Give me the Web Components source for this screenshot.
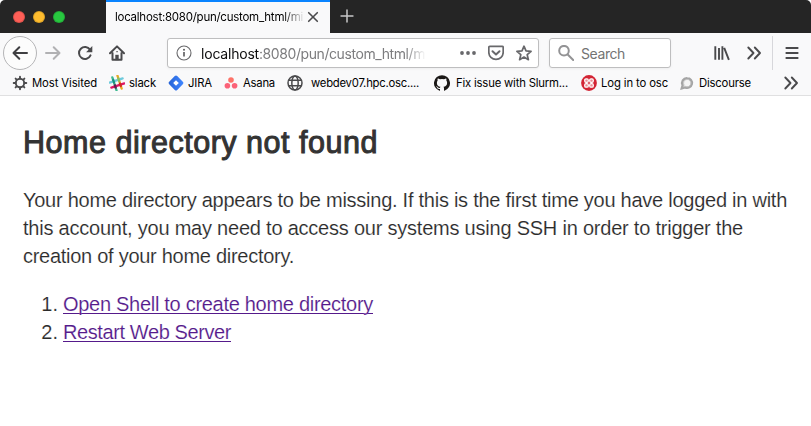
<!DOCTYPE html>
<html lang="en">
<head>
<meta charset="utf-8">
<title>Home directory not found</title>
<style>
html,body{margin:0;padding:0;background:#fff;overflow:hidden}
body{font-family:Inter,"Liberation Sans",sans-serif;color:#000}
</style>
</head>
<body>
<browser-window></browser-window>
<script>
const icon = {
back:'<path d="M15 8H2M7.3 2.2 1.5 8l5.8 5.8" fill="none" stroke="#3f3f42" stroke-width="2" stroke-linecap="round" stroke-linejoin="round"/>',
forward:'<path d="M1 8h13M8.7 2.2 14.5 8l-5.8 5.8" fill="none" stroke="#b1b1b3" stroke-width="2" stroke-linecap="round" stroke-linejoin="round"/>',
reload:'<path d="M13 4.6A6 6 0 1 0 13.5 10.4" fill="none" stroke="#4a4a4c" stroke-width="2" stroke-linecap="round"/><path d="M15.3 1v6.2H9.1z" fill="#4a4a4c"/>',
home:'<path d="M1 8.3 8 1.4l7 6.9M3.5 8v6.8h9V8" fill="none" stroke="#4a4a4c" stroke-width="2" stroke-linecap="round" stroke-linejoin="round"/><path d="M6.3 15.2V9.8h3.4v5.4z" fill="#4a4a4c"/><path d="M7.4 6h1.3v1.3H7.4z" fill="#4a4a4c"/>',
info:'<circle cx="8" cy="8" r="7" fill="none" stroke="#68686b" stroke-width="1.1"/><path d="M8 7v4.6" stroke="#58585b" stroke-width="1.6"/><circle cx="8" cy="4.8" r="1" fill="#58585b"/>',
dots:'<g fill="#68686b"><circle cx="2" cy="8" r="1.9"/><circle cx="8" cy="8" r="1.9"/><circle cx="14" cy="8" r="1.9"/></g>',
pocket:'<path d="M1.8 1.4h12.4q1 0 1 1v4.9a7.2 7.1 0 0 1-14.4 0V2.4q0-1 1-1z" fill="none" stroke="#68686b" stroke-width="1.7"/><path d="M4.5 6.2 8 9.5l3.5-3.3" fill="none" stroke="#68686b" stroke-width="2" stroke-linecap="round" stroke-linejoin="round"/>',
star:'<path d="m8 1.2 2 4.7 5.1.4-3.9 3.4 1.2 5L8 12.1l-4.4 2.6 1.2-5L.9 6.3 6 5.9z" fill="none" stroke="#68686b" stroke-width="1.7" stroke-linejoin="round"/>',
search:'<circle cx="6" cy="5.7" r="4.8" fill="none" stroke="#939395" stroke-width="2"/><path d="m9.7 9.5 5.5 5.5" stroke="#939395" stroke-width="2" stroke-linecap="round"/>',
library:'<path d="M1.3 1.2v13.6M5 3v11.8M8.4 1.2v13.6M10.2 2.8l4.7 12" fill="none" stroke="#4a4a4c" stroke-width="1.9"/>',
more:'<path d="M2.3 2.5 7.5 8l-5.2 5.5M8.8 2.5 14 8l-5.2 5.5" fill="none" stroke="#4a4a4c" stroke-width="1.9" stroke-linecap="round" stroke-linejoin="round"/>',
menu:'<path d="M2.3 3h11.4M2.3 8h11.4M2.3 13h11.4" stroke="#4a4a4c" stroke-width="1.8" stroke-linecap="round"/>',
close:'<path d="m3.7 3.7 8.6 8.6m0-8.6-8.6 8.6" stroke="#4a4a4c" stroke-width="1.6" stroke-linecap="round"/>',
plus:'<path d="M8 1.2v13.6M1.2 8h13.6" stroke="#c8c8c9" stroke-width="1.7" stroke-linecap="round"/>',
gear:'<circle cx="8" cy="8" r="4.2" fill="none" stroke="#4a4a4c" stroke-width="1.9"/><g stroke="#4a4a4c" stroke-width="1.9" stroke-linecap="round"><path d="M8 1.7v1.8M8 12.5v1.8M1.7 8h1.8M12.5 8h1.8M3.6 3.6l1 1M11.4 11.4l1 1M3.6 12.4l1-1M11.4 4.6l1-1"/></g>',
slack:'<g transform="rotate(-18 8 8)" fill="none" stroke-width="2.3" stroke-linecap="round"><path d="M5.3 1.2v13.6" stroke="#3eb991"/><path d="M10.7 1.2v13.6" stroke="#e9a820"/><path d="M1.2 5.3h13.6" stroke="#6ecadc"/><path d="M1.2 10.7h13.6" stroke="#e01765"/><path d="M5.3 4v2.6" stroke="#1a937d"/><path d="M10.7 4v2.6" stroke="#8fbf5e"/><path d="M5.3 9.5V12" stroke="#64204f"/><path d="M10.7 9.5V12" stroke="#d02b21"/></g>',
jira:'<defs><linearGradient id="j"><stop stop-color="#2563d7"/><stop offset="1" stop-color="#4187ff"/></linearGradient></defs><path d="M6.8 1Q8 0 9.2 1l5.6 5.8q1.2 1.2 0 2.4L9.2 15q-1.2 1.2-2.4 0L1.2 9.2Q0 8 1.2 6.8z" fill="url(#j)"/><path d="M8 5.2 10.8 8 8 10.8 5.2 8z" fill="#fff"/>',
asana:'<g fill="#fb6278"><circle cx="8" cy="5" r="2.8" fill="#fd7268"/><circle cx="4.4" cy="10.8" r="2.8"/><circle cx="11.6" cy="10.8" r="2.8"/></g>',
globe:'<g fill="none" stroke="#4a4a4c" stroke-width="1.5"><circle cx="8" cy="8" r="7"/><ellipse cx="8" cy="8" rx="3.2" ry="7"/><path d="M1.8 5.3h12.4M1.8 10.7h12.4"/></g>',
github:'<path fill="#1b1817" d="M8 .2a8 8 0 0 0-2.5 15.6c.4.1.5-.2.5-.4v-1.5c-2.2.5-2.7-.9-2.7-.9-.4-1-.9-1.2-.9-1.2-.7-.5.1-.5.1-.5.8.1 1.2.8 1.2.8.7 1.3 1.9.9 2.3.7.1-.5.3-.9.5-1.1-1.8-.2-3.6-.9-3.6-4 0-.9.3-1.6.8-2.1-.1-.2-.4-1 .1-2.1 0 0 .7-.2 2.2.8a7.6 7.6 0 0 1 4 0c1.5-1 2.2-.8 2.2-.8.4 1.1.2 1.9.1 2.1.5.5.8 1.2.8 2.1 0 3.1-1.9 3.8-3.7 4 .3.2.6.7.6 1.5v2.2c0 .2.1.5.5.4A8 8 0 0 0 8 .2z"/>',
osc:'<circle cx="8" cy="8" r="7.9" fill="#d32535"/><g fill="#e98d95" stroke="#fff" stroke-width="1.2"><rect x="3.7" y="3.9" width="3.6" height="3.5" rx="1.3"/><rect x="8.7" y="3.9" width="3.6" height="3.5" rx="1.3"/><rect x="3.7" y="8.7" width="3.6" height="3.5" rx="1.3"/><rect x="8.7" y="8.7" width="3.6" height="3.5" rx="1.3"/></g>',
discourse:'<path d="M8.2 3.2a4.8 4.8 0 1 1-2 9.2l-3.4.9.9-3a4.8 4.8 0 0 1 4.5-7.1z" fill="#f4f4f4" stroke="#a5a5a5" stroke-width="2.4"/><path d="M8.2 4.4a3.7 3.7 0 1 1-1.9 6.9l-1.7.4.5-1.7a3.7 3.7 0 0 1 3.1-5.6z" fill="none" stroke="#c4c4c4" stroke-width=".9"/>'
};

/* One icon on a 16-unit grid, sized by its attribute. */
customElements.define('ui-icon', class extends HTMLElement{
  connectedCallback(){
    const s=this.getAttribute('size')||16;
    this.attachShadow({mode:'open'}).innerHTML=`<style>:host{display:block;flex:none;width:${s}px;height:${s}px}svg{display:block}</style><svg width="${s}" height="${s}" viewBox="0 0 16 16">${icon[this.getAttribute('name')]}</svg>`;
  }
});

/* A single line of text tracked to a given measure. */
customElements.define('fit-text', class extends HTMLElement{
  connectedCallback(){
    this.attachShadow({mode:'open'}).innerHTML='<style>:host{display:block;flex:none;white-space:pre}span{display:inline-block}</style><span><slot></slot></span>';
    const span=this.shadowRoot.querySelector('span'), w=+this.getAttribute('width');
    this.style.width=w+'px';
    span.style.letterSpacing=(w-span.getBoundingClientRect().width)/this.textContent.length+'px';
  }
});

customElements.define('tab-strip', class extends HTMLElement{
  connectedCallback(){
    this.attachShadow({mode:'open'}).innerHTML=`<style>
:host{display:flex;height:33px;background:#252525;border-radius:5px 5px 0 0;align-items:stretch}
.lights{display:flex;width:93px;padding-left:13px;gap:8px;align-items:center}
.lights i{width:12px;height:12px;border-radius:50%;background:#fe5f57;box-sizing:border-box;border:.5px solid #0002}
.lights i:nth-child(2){background:#febc2e}.lights i:nth-child(3){background:#28c840}
.tab{display:flex;box-sizing:border-box;width:224px;border-top:2px solid #0a84ff;background:#f9f9fa;align-items:center;padding:0 9px 1px;font-size:11.5px}
.label{width:190px;overflow:hidden;-webkit-mask:linear-gradient(90deg,#000 168px,transparent 190px)}
.add{display:flex;align-items:center;padding-left:10px}
</style><div class="lights"><i></i><i></i><i></i></div><div class="tab"><div class="label"><fit-text width="188">localhost:8080/pun/custom_html/mi</fit-text></div><ui-icon name="close" size="16"></ui-icon></div><div class="add"><ui-icon name="plus" size="14" style="margin-top:-1px"></ui-icon></div>`;
  }
});

customElements.define('nav-bar', class extends HTMLElement{
  connectedCallback(){
    this.attachShadow({mode:'open'}).innerHTML=`<style>
:host{display:flex;height:40px;box-sizing:border-box;align-items:center;padding:0 0 0 3px}
.back{display:grid;place-items:center;width:34px;height:34px;box-sizing:border-box;border:1px solid #b5b5b7;border-radius:50%;background:#fcfcfc}
.field{display:flex;align-items:center;box-sizing:border-box;height:30px;background:#fff;border:1px solid #bebebf;border-radius:3px;box-shadow:0 1px 3px #0000000d;font-size:14px}
.url{width:372px;margin-left:42px;padding-left:8px}
.addr{display:flex;width:224px;color:#7c7c7e;overflow:hidden;-webkit-mask:linear-gradient(90deg,#000 204px,transparent 225px)}
.addr :first-child{color:#0c0c0d}
.search{width:122px;margin-left:10px;padding-left:8px;color:#737373}
.sep{width:1px;height:34px;background:#d7d7db}
</style><div class="back"><ui-icon name="back"></ui-icon></div>
<ui-icon name="forward" style="margin-left:8px"></ui-icon><ui-icon name="reload" style="margin-left:16px"></ui-icon><ui-icon name="home" style="margin-left:16px"></ui-icon>
<div class="field url"><ui-icon name="info"></ui-icon><div class="addr" style="margin-left:9px"><fit-text width="58">localhost</fit-text><fit-text width="166">:8080/pun/custom_html/m</fit-text></div><ui-icon name="dots" style="margin-left:35px"></ui-icon><ui-icon name="pocket" style="margin-left:12px"></ui-icon><ui-icon name="star" style="margin-left:12px"></ui-icon></div>
<div class="field search"><ui-icon name="search"></ui-icon><fit-text width="44" style="margin-left:7px">Search</fit-text></div>
<ui-icon name="library" style="margin-left:43px"></ui-icon><ui-icon name="more" style="margin-left:16px"></ui-icon><div class="sep" style="margin-left:10px"></div><ui-icon name="menu" style="margin-left:11px"></ui-icon>`;
  }
});

customElements.define('bookmark-item', class extends HTMLElement{
  connectedCallback(){
    const a=n=>this.getAttribute(n);
    this.attachShadow({mode:'open'}).innerHTML=`<style>:host{display:flex;flex:none;align-items:center;gap:${a('gap')||4}px}</style><ui-icon name="${a('icon')}"></ui-icon><fit-text width="${a('measure')}">${a('label')}</fit-text>`;
  }
});

customElements.define('bookmarks-bar', class extends HTMLElement{
  connectedCallback(){
    const items=[['gear','Most Visited',65,4,0],['slack','slack',27,4,12],['jira','JIRA',24,4,12],['asana','Asana',32,4,11],['globe','webdev07.hpc.osc....',108,8,12],['github','Fix issue with Slurm...',112,6,15],['osc','Log in to osc',67,4,13],['discourse','Discourse',52,4,11]];
    this.attachShadow({mode:'open'}).innerHTML=`<style>:host{display:flex;align-items:center;height:20px;padding:0 12px 2px 12px;border-bottom:1px solid #e0e0e1;font-size:11.3px;line-height:16px}</style>`+
    items.map(([i,l,w,g,m])=>`<bookmark-item icon="${i}" label="${l}" measure="${w}" gap="${g}" style="margin-left:${m}px"></bookmark-item>`).join('')+'<ui-icon name="more" style="margin-left:auto"></ui-icon>';
  }
});

customElements.define('page-notice', class extends HTMLElement{
  connectedCallback(){
    this.attachShadow({mode:'open'}).innerHTML=`<style>
:host{display:block;padding:28px 23px 0;color:#2b2b2b;font:20px/28px "Liberation Sans",Arial,sans-serif;-webkit-text-stroke:.14px #fff}
h1{margin:0 0 26px;font-size:30.5px;line-height:36px;font-weight:400;color:#333;-webkit-text-stroke:1px #333}
p{margin:0 0 20px}
ol{margin:0;padding:0;list-style:none}
li{display:flex}
li>span{width:35px;margin-right:5px;text-align:right}
a{display:block;color:#551a8b;text-decoration:none;background:linear-gradient(#551a8b,#551a8b) 0 23px/100% 1px no-repeat}
</style><h1><fit-text width="355">Home directory not found</fit-text></h1>
<p><fit-text width="764">Your home directory appears to be missing. If this is the first time you have logged in with</fit-text><fit-text width="720">this account, you may need to access our systems using SSH in order to trigger the</fit-text><fit-text width="271">creation of your home directory.</fit-text></p>
<ol><li><span>1.</span><a href="#"><fit-text width="310">Open Shell to create home directory</fit-text></a></li><li><span>2.</span><a href="#"><fit-text width="168">Restart Web Server</fit-text></a></li></ol>`;
  }
});

customElements.define('browser-window', class extends HTMLElement{
  connectedCallback(){
    this.attachShadow({mode:'open'}).innerHTML=`<style>:host{display:block;width:811px;height:426px;overflow:hidden}header{background:#f9f9fa;border-radius:5px 5px 0 0}</style><header><tab-strip></tab-strip><nav-bar></nav-bar><bookmarks-bar></bookmarks-bar></header><page-notice></page-notice>`;
  }
});
</script>
</body>
</html>
